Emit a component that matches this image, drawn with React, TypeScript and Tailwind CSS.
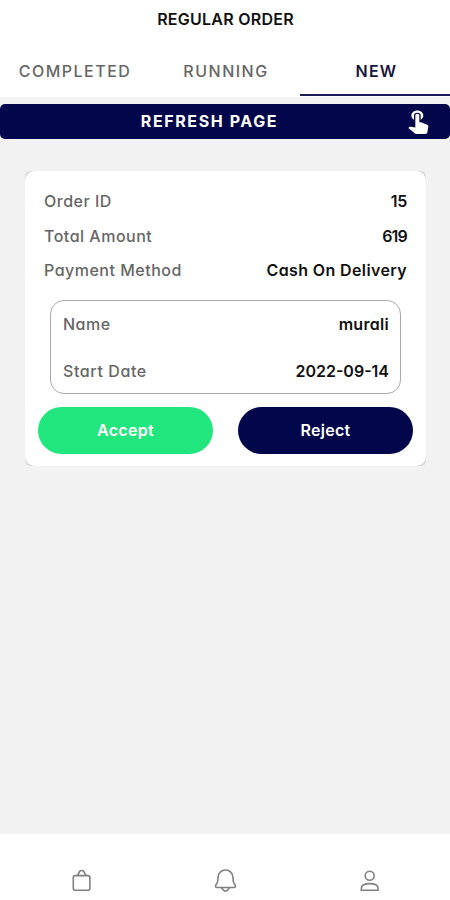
import React from "react";
import { MdTouchApp } from "react-icons/md";

type RowProps = { label: string; value: string; labelClass?: string; valueClass?: string };

function Row({ label, value, labelClass = "tracking-[0.5px]", valueClass = "" }: RowProps) {
  return (
    <div className="flex items-center justify-between whitespace-nowrap">
      <span className={`font-medium text-[#666] ${labelClass}`}>{label}</span>
      <span className={`font-semibold text-[#111] ${valueClass}`}>{value}</span>
    </div>
  );
}

function BagIcon() {
  return (
    <svg width="20" height="24" viewBox="0 0 20 24" fill="none" stroke="#808080" strokeWidth="1.6" strokeLinejoin="round">
      <rect x="1.300" y="6.600" width="16.600" height="14.600" rx="2" />
      <path d="M5.100 6.400C6.100 5.800 6.400 5.200 6.700 4.200C7.200 2.400 8.200 1.500 9.700 1.500S12.200 2.400 12.700 4.200C13 5.200 13.300 5.800 14.300 6.400" />
    </svg>
  );
}

function BellIcon() {
  return (
    <svg width="24" height="24" viewBox="0 0 24 24" fill="none" stroke="#808080" strokeWidth="1.6" strokeLinejoin="round">
      <path d="M11.500 1C7.200 1 4.200 4.300 4 8.500L3.700 12.200C3.500 14.500 1.500 15.500 1.500 17.300C1.500 18.200 2 18.500 2.900 18.500H20.100C21 18.500 21.500 18.200 21.500 17.300C21.500 15.500 19.500 14.500 19.300 12.200L19 8.500C18.800 4.300 15.800 1 11.500 1Z" />
      <path d="M7.300 18.600L9.700 21.400C10.800 22.500 12.200 22.500 13.300 21.400L15.700 18.600" />
    </svg>
  );
}

function UserIcon() {
  return (
    <svg width="20" height="24" viewBox="0 0 20 24" fill="none" stroke="#808080" strokeWidth="1.6" strokeLinejoin="round">
      <circle cx="9.700" cy="6.800" r="4.500" />
      <path d="M1.300 21.300V19.600C1.300 16.400 4.200 14.600 9.700 14.600S18.100 16.400 18.100 19.600V21.300Z" />
    </svg>
  );
}

export default function App() {
  return (
    <div className="flex h-[900px] w-[450px] flex-col overflow-hidden bg-[#f2f2f2] font-['Inter','Liberation_Sans',sans-serif] text-[16px] leading-5 [font-feature-settings:'cv11'_1]">
      <header className="flex h-[43px] shrink-0 justify-center bg-white pl-px pt-[9px]">
        <h1 className="whitespace-nowrap font-semibold tracking-[0.25px] text-[#111]">REGULAR ORDER</h1>
      </header>
      <nav className="grid h-[54px] shrink-0 grid-cols-3 bg-white pt-[3px] text-center font-medium text-[#666]">
        <button className="pb-px tracking-[1.5px]">COMPLETED</button>
        <button className="pb-px pl-0.5 tracking-[1.5px]">RUNNING</button>
        <button className="mb-px border-b-2 border-[#1b1d58] pl-[3px] pt-px font-semibold tracking-[1.2px] text-[#14163f]">NEW</button>
      </nav>
      <button className="mt-[7px] flex h-[35px] shrink-0 items-center rounded-[5px] bg-[#02064a] text-white">
        <span className="flex-1 pb-0.5 pl-[17px] text-center font-bold tracking-[1.6px]">REFRESH PAGE</span>
        <MdTouchApp className="mb-[3px] mr-[16px] h-[27px] w-[32px]" preserveAspectRatio="none" />
      </button>
      <main className="flex-1 pl-[25px] pr-[24px] pt-[32px]">
        <div className="rounded-[5px] bg-[#dcdcdc]">
          <section className="h-[295px] rounded-[10px] bg-white px-[13px] pt-[20px]">
            <div className="flex flex-col gap-[14.5px] px-1.5">
              <Row label="Order ID" value="15" valueClass="tracking-[-0.3px]" />
              <Row label="Total Amount" value="619" valueClass="tracking-[-0.8px]" />
              <Row label="Payment Method" value="Cash On Delivery" valueClass="tracking-[0.37px]" />
            </div>
            <div className="mx-[12px] mt-[20px] flex h-[94px] flex-col justify-between rounded-[14px] border border-[#aaa] pb-[12px] pl-[12px] pr-[11px] pt-[13px]">
              <Row label="Name" value="murali" valueClass="tracking-[0.3px]" />
              <Row label="Start Date" value="2022-09-14" labelClass="tracking-[0.6px]" />
            </div>
            <div className="mt-[13px] flex justify-between text-white">
              <button className="h-[47px] w-[175px] rounded-full bg-[#20e67d] pb-px font-semibold tracking-[0.3px]">Accept</button>
              <button className="h-[47px] w-[175px] rounded-full bg-[#02064a] pb-px font-semibold tracking-[0.3px]">Reject</button>
            </div>
          </section>
        </div>
      </main>
      <footer className="flex h-[66px] shrink-0 items-start justify-between bg-white pl-[72px] pr-[70px] pt-[35px]">
        <BagIcon />
        <BellIcon />
        <UserIcon />
      </footer>
    </div>
  );
}
